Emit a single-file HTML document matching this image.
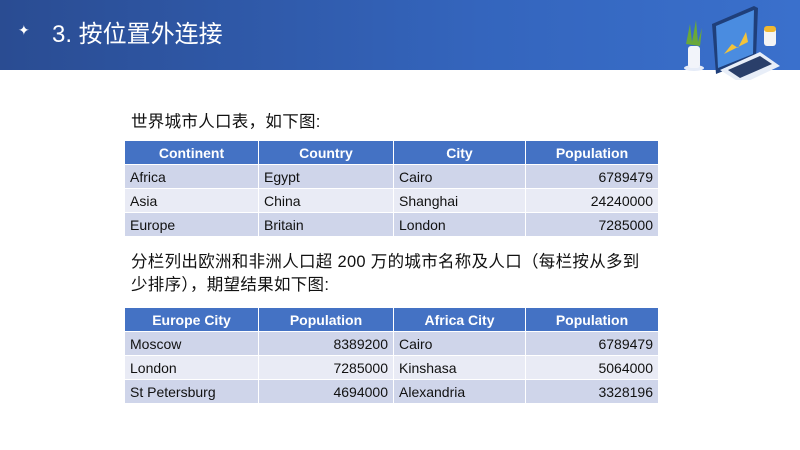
<!DOCTYPE html>
<html><head><meta charset="utf-8"><style>
body{margin:0;width:800px;height:450px;background:#fff;position:relative;overflow:hidden;font-family:"Liberation Sans","Noto Sans CJK SC",sans-serif}
.hdr{position:absolute;left:0;top:0;width:800px;height:70px;background:linear-gradient(90deg,#2a4c92 0%,#3465bd 60%,#3a70cc 100%)}
.hdr .t{position:absolute;left:52px;top:18px;color:#fff;font-size:24px;line-height:34px}
.hdr .s{position:absolute;left:18px;top:22px;color:#fff;font-size:14px}
table{position:absolute;left:124px;border-collapse:collapse;font-size:14px;color:#111}
td,th{border:1px solid #fff;padding:0 5px;height:23px}
th{background:#4472c4;color:#fff;font-weight:bold;text-align:center}
tr.a td{background:#cfd5ea}
tr.b td{background:#e9ebf5}
.r{text-align:right}
.p{position:absolute;left:131px;font-size:16.5px;letter-spacing:0.3px;color:#111;line-height:23px}
</style></head><body>
<div class="hdr"><span class="s">✦</span><span class="t">3. 按位置外连接</span>
<svg style="position:absolute;left:676px;top:4px" width="120" height="76" viewBox="0 0 120 76">
<ellipse cx="18" cy="64" rx="10" ry="3" fill="#e6ecf8"/>
<path d="M10 40 L14 20 L16 38 L20 16 L22 38 L26 24 L24 42 Z" fill="#6aa83a"/>
<rect x="12" y="42" width="12" height="22" rx="3" fill="#f2f4fa"/>
<path d="M36 20 L78 2 L82 4 L80 54 L40 70 Z" fill="#1f3f7a"/>
<path d="M40 22 L78 6 L77 50 L42 64 Z" fill="#4a8ce0"/>
<path d="M48 50 L56 40 L62 44 L70 28 L72 38 Z" fill="#f3c33a"/>
<path d="M44 66 L84 48 L104 62 L66 80 Z" fill="#e8eef8"/>
<path d="M52 66 L84 52 L96 60 L64 74 Z" fill="#2a3f6a"/>
<rect x="88" y="24" width="12" height="18" rx="3" fill="#f4f4f4"/>
<rect x="88" y="22" width="12" height="6" rx="3" fill="#f0b830"/>
</svg></div>
<div class="p" style="top:111px">世界城市人口表，如下图:</div>
<table style="top:140px">
<tr><th style="width:123px">Continent</th><th style="width:124px">Country</th><th style="width:121px">City</th><th style="width:122px">Population</th></tr>
<tr class="a"><td>Africa</td><td>Egypt</td><td>Cairo</td><td class="r">6789479</td></tr>
<tr class="b"><td>Asia</td><td>China</td><td>Shanghai</td><td class="r">24240000</td></tr>
<tr class="a"><td>Europe</td><td>Britain</td><td>London</td><td class="r">7285000</td></tr>
</table>
<div class="p" style="top:251px">分栏列出欧洲和非洲人口超 200 万的城市名称及人口（每栏按从多到<br>少排序），期望结果如下图:</div>
<table style="top:307px">
<tr><th style="width:123px">Europe City</th><th style="width:124px">Population</th><th style="width:121px">Africa City</th><th style="width:122px">Population</th></tr>
<tr class="a"><td>Moscow</td><td class="r">8389200</td><td>Cairo</td><td class="r">6789479</td></tr>
<tr class="b"><td>London</td><td class="r">7285000</td><td>Kinshasa</td><td class="r">5064000</td></tr>
<tr class="a"><td>St Petersburg</td><td class="r">4694000</td><td>Alexandria</td><td class="r">3328196</td></tr>
</table>
</body></html>
